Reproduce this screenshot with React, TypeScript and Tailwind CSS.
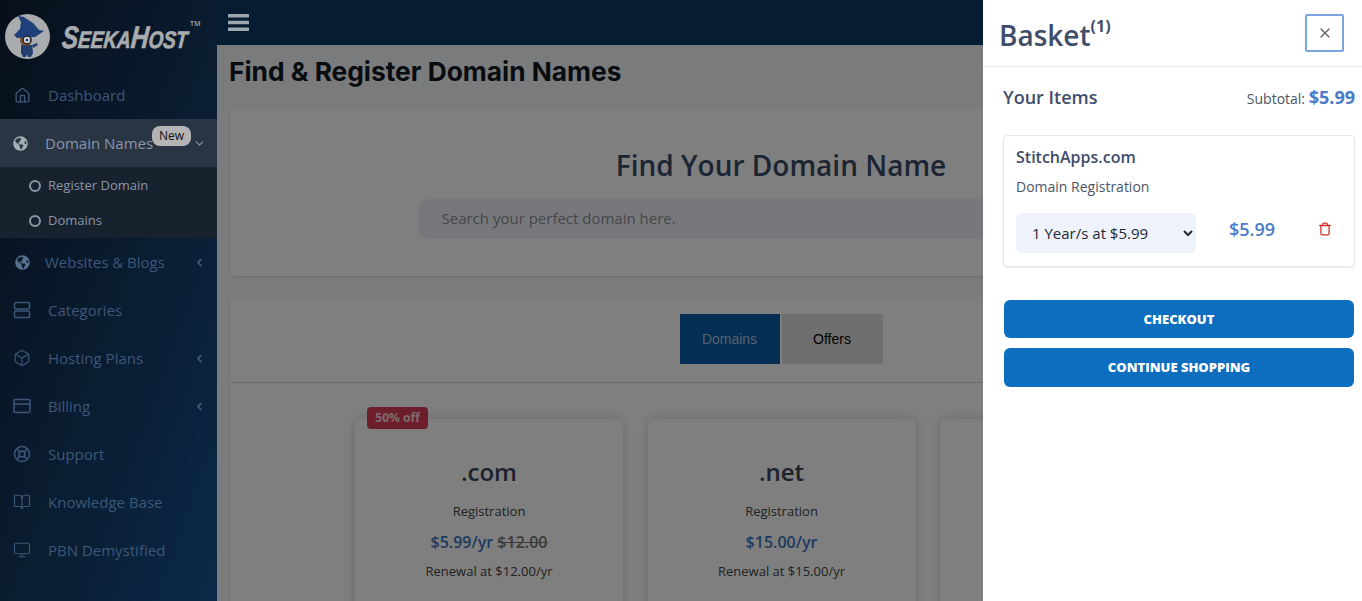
import React from "react";
import { BookOpen, Box, ChevronDown, ChevronLeft, House, LifeBuoy, Monitor, Trash, X } from "lucide-react";
import { FaGlobeAmericas } from "react-icons/fa";

const RowsIcon = () => (
  <svg width="18" height="18" viewBox="0 0 18 18" fill="none" stroke="currentColor" strokeWidth="1.5">
    <rect x="1.5" y="1.5" width="15" height="6.5" rx="1.5" />
    <rect x="1.5" y="10" width="15" height="6.5" rx="1.5" />
  </svg>
);

const CardIcon = () => (
  <svg width="18" height="18" viewBox="0 0 18 18" fill="none" stroke="currentColor" strokeWidth="1.5">
    <rect x="1" y="2.5" width="16" height="13" rx="1" />
    <path d="M1 7h16" />
  </svg>
);

const Hamburger = () => (
  <svg width="21" height="17" viewBox="0 0 21 17" fill="#9ea7ad">
    <rect width="21" height="3.6" rx="0.5" />
    <rect y="6.7" width="21" height="3.6" rx="0.5" />
    <rect y="13.4" width="21" height="3.6" rx="0.5" />
  </svg>
);

const Wizard = () => (
  <svg width="45" height="45" viewBox="0 0 45 45" className="shrink-0">
    <circle cx="22.5" cy="22.5" r="22.5" fill="#a9acaf" />
    <path d="M16 31h11l1 8-2 4h-3l-1-3-1 3h-3l-2-4z" fill="#233f70" />
    <path d="M27 31l5-2 1 2-5 3z" fill="#233f70" />
    <circle cx="21" cy="26" r="6" fill="#7a4a2c" />
    <path d="M13 2l6 1 9 6 6 7 5 1-9 6-18 1-3-3 6-6 1-7z" fill="#1f3f78" />
    <circle cx="22" cy="26" r="3.8" fill="#d8d8d8" stroke="#1a1a1a" strokeWidth="1.2" />
    <circle cx="22" cy="26" r="1.6" fill="#1d4d88" />
  </svg>
);

const Row = ({
  icon,
  label,
  arrow,
  narrow,
}: {
  icon: React.ReactNode;
  label: string;
  arrow?: boolean;
  narrow?: boolean;
}) => (
  <div className="flex h-12 items-center pl-[13px] pr-[11px] text-[#3d5778]">
    <span className="flex w-[18px] justify-center">{icon}</span>
    <span className={`${narrow ? "ml-[14px]" : "ml-[17px]"} text-[15px] whitespace-nowrap`}>{label}</span>
    {arrow && <ChevronLeft size={13} className="ml-auto text-[#556b84]" />}
  </div>
);

const Sidebar = () => (
  <aside className="flex h-full w-[217px] shrink-0 flex-col bg-linear-to-br from-[#070f1a] to-[#0b2947]">
    <div className="flex h-[71px] items-start pl-[5px] pt-[14px]">
      <Wizard />
      <span className="ml-[12px] mt-[8px] flex w-[126px] origin-left scale-x-[0.79] -skew-x-6 items-baseline font-black whitespace-nowrap text-[#a9acaf] italic [-webkit-text-stroke:0.7px_#a9acaf] [font-family:'Liberation_Sans',sans-serif]">
        <span className="text-[31px] leading-[32px]">S</span>
        <span className="text-[24px] leading-[32px]">EEKA</span>
        <span className="text-[31px] leading-[32px]">H</span>
        <span className="text-[24px] leading-[32px]">OST</span>
      </span>
      <span className="ml-[2px] mt-[5px] text-[7px] font-bold text-[#8a8d90]">TM</span>
    </div>
    <Row icon={<House size={17} />} label="Dashboard" />
    <div className="relative flex h-12 items-center bg-[#2a3544] pl-[13px] pr-[11px] text-[#8a96a6]">
      <FaGlobeAmericas size={15} className="text-[#a6aeb5]" />
      <span className="ml-[17px] text-[15px]">Domain Names</span>
      <ChevronDown size={13} className="ml-auto text-[#8a96a6]" />
      <span className="absolute left-[152px] top-[7px] flex h-5 w-[39px] items-center justify-center rounded-[8px] bg-[#b4b4b4] text-xs text-[#111]">
        New
      </span>
    </div>
    <div className="flex h-[71px] flex-col justify-center gap-[15px] bg-[#18222f] pt-[2px] text-[13px] text-[#8a96a6]">
      {["Register Domain", "Domains"].map((item) => (
        <div key={item} className="flex h-5 items-center pl-[29px]">
          <span className="size-3 rounded-full border-2 border-[#8a96a6]" />
          <span className="ml-[7px]">{item}</span>
        </div>
      ))}
    </div>
    <Row icon={<FaGlobeAmericas size={15} className="text-[#56708f]" />} label="Websites & Blogs" arrow narrow />
    <Row icon={<RowsIcon />} label="Categories" />
    <Row icon={<Box size={18} strokeWidth={1.5} />} label="Hosting Plans" arrow />
    <Row icon={<CardIcon />} label="Billing" arrow />
    <Row icon={<LifeBuoy size={18} />} label="Support" />
    <Row icon={<BookOpen size={18} strokeWidth={1.5} />} label="Knowledge Base" />
    <Row icon={<Monitor size={18} strokeWidth={1.5} />} label="PBN Demystified" />
  </aside>
);

const DomainCard = ({
  tld,
  price,
  old,
  renewal,
  badge,
}: {
  tld: string;
  price: string;
  old?: string;
  renewal: string;
  badge?: string;
}) => (
  <div className="relative h-[240px] w-[268px] rounded-lg bg-white pt-[35px] text-center shadow-[0_0_12px_rgba(0,0,0,0.18)]">
    {badge && (
      <span className="absolute -top-3 left-3 flex h-[22px] w-[61px] items-center justify-center rounded bg-[#dc3a55] text-xs font-bold text-white/80">
        {badge}
      </span>
    )}
    <div className="h-[36px] text-2xl leading-[36px] font-semibold text-[#3a4458]">{tld}</div>
    <div className="mt-[11px] text-[13px] leading-5 text-[#444]">Registration</div>
    <div className="mt-[11px] text-base leading-5 font-semibold text-[#3f74c0]">
      {price} {old && <span className="text-[#777] line-through">{old}</span>}
    </div>
    <div className="mt-[9px] text-[13px] leading-5 text-[#444]">{renewal}</div>
  </div>
);

const Main = () => (
  <div className="relative flex h-full min-w-0 flex-1 flex-col">
    <header className="flex h-[45px] shrink-0 items-center bg-[#051c33] pb-[1px] pl-[11px]">
      <Hamburger />
    </header>
    <main className="relative flex-1 overflow-hidden bg-[#f4f6f9] pl-[13px] pr-[30px]">
      <h1 className="-ml-px mt-[9px] h-[36px] text-[26.3px] leading-[36px] font-bold text-[#101820] [font-family:Inter,sans-serif]">
        Find &amp; Register Domain Names
      </h1>
      <section className="mt-[18px] flex h-[168px] flex-col items-center rounded bg-white pt-[38px] shadow-sm">
        <h2 className="text-[28px] leading-[38px] font-semibold text-[#3a4a66]">Find Your Domain Name</h2>
        <div className="mt-[15px] flex h-10 w-[727px] items-center rounded-[10px] bg-[#eef0f8] pb-[2px] pl-[24px] text-[15px] text-[#8d8f94]">
          Search your perfect domain here.
        </div>
      </section>
      <section className="mt-[21px] rounded bg-white shadow-sm">
        <div className="flex h-[86px] justify-center gap-[2px] border-b border-[#ddd] pt-[17px]">
          <button className="h-[50px] w-[100px] bg-[#0a5cab] pb-px text-sm text-[#a9c4dc] [font-family:'Liberation_Sans',sans-serif]">
            Domains
          </button>
          <button className="h-[50px] w-[101px] bg-[#dedede] pb-px text-sm text-black [font-family:'Liberation_Sans',sans-serif]">
            Offers
          </button>
        </div>
        <div className="flex justify-center gap-[24.5px] pl-px pt-[36px] pb-8">
          <DomainCard tld=".com" price="$5.99/yr" old="$12.00" renewal="Renewal at $12.00/yr" badge="50% off" />
          <DomainCard tld=".net" price="$15.00/yr" renewal="Renewal at $15.00/yr" />
          <DomainCard tld=".org" price="$15.00/yr" renewal="Renewal at $15.00/yr" />
        </div>
      </section>
      <div className="absolute inset-0 bg-black/50" />
    </main>
  </div>
);

const Basket = () => (
  <div className="absolute inset-y-0 right-0 z-10 flex w-[379px] flex-col bg-white">
    <div className="flex h-[67px] shrink-0 items-start justify-between border-b border-[#e5e7eb] pl-[16px] pr-[18px]">
      <div className="mt-[15px] flex items-start text-[#3f4d6b]">
        <span className="text-[28px] leading-[40px] font-semibold">Basket</span>
        <span className="mt-[1px] text-base leading-5 font-bold">(1)</span>
      </div>
      <button className="mt-[14px] flex h-[38px] w-[39px] items-center justify-center rounded-[2px] border-2 border-[#7aa5dc] text-[#666]">
        <X size={16} />
      </button>
    </div>
    <div className="flex flex-col pl-[20px] pr-[7px]">
      <div className="flex h-[60px] items-center justify-between">
        <span className="text-lg font-semibold text-[#3f4d6b]">Your Items</span>
        <span className="text-sm text-[#4b5563]">
          Subtotal: <span className="text-lg font-bold text-[#4a7cc7]">$5.99</span>
        </span>
      </div>
      <div className="mt-[8px] h-[132px] rounded border border-[#e5e7eb] px-[12px] pt-[10px] shadow-[0_1px_2px_rgba(0,0,0,0.08)]">
        <div className="text-base leading-[22px] font-semibold text-[#3f4d6b]">StitchApps.com</div>
        <div className="mt-[9px] text-sm leading-5 text-[#4b5563]">Domain Registration</div>
        <div className="mt-[16px] flex items-start">
          <select className="h-10 w-[180px] rounded-md bg-[#eef2fb] pl-3 text-[15px] text-[#1f2937]">
            <option>1 Year/s at $5.99</option>
          </select>
          <span className="ml-[33px] text-[18px] leading-[32px] font-semibold text-[#4a7cc7]">$5.99</span>
          <Trash size={14} strokeWidth={2.2} className="ml-[43px] mt-[9px] text-[#c9302c]" />
        </div>
      </div>
      <div className="mt-[33px] flex flex-col gap-[10px] pl-px pr-px">
        <button className="h-[38px] rounded-md bg-[#0d6ebf] pt-px text-[13px] font-extrabold text-white">CHECKOUT</button>
        <button className="h-[39px] rounded-md bg-[#0d6ebf] text-[13px] font-extrabold text-white">
          CONTINUE SHOPPING
        </button>
      </div>
    </div>
  </div>
);

const App = () => {
  return (
    <div className="relative flex h-[601px] w-full overflow-hidden [font-family:'Open_Sans',sans-serif]">
      <Sidebar />
      <Main />
      <Basket />
    </div>
  );
};

export default App;
